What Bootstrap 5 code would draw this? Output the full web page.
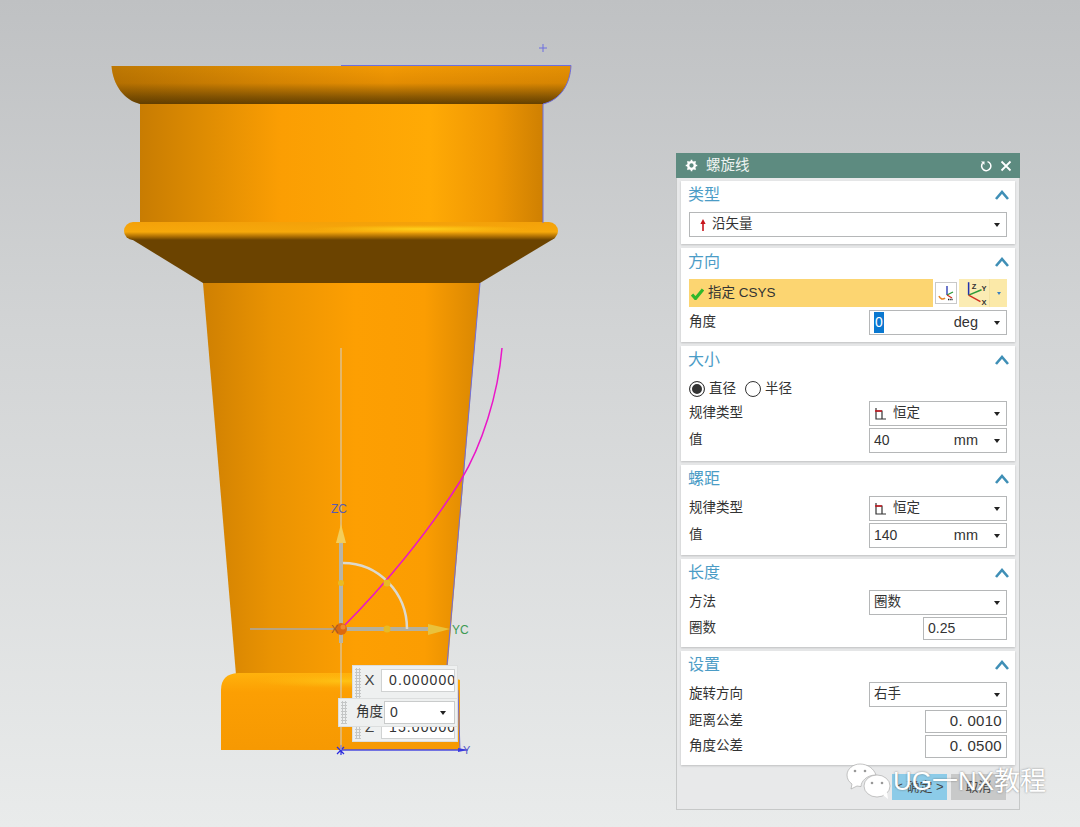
<!DOCTYPE html>
<html lang="zh-CN">
<head>
    <meta charset="UTF-8">
    <meta name="viewport" content="width=device-width, initial-scale=1.0">
    <title>螺旋线</title>
    <link rel="stylesheet" href="https://cdn.jsdelivr.net/npm/bootstrap@5.3.0/dist/css/bootstrap.min.css">
    <style>
        body {
            margin: 0;
            height: 827px;
            overflow: hidden;
            font-family: "Liberation Sans", "Noto Sans CJK SC", sans-serif;
            font-size: 13.5px;
            color: #333;
            background: linear-gradient(180deg, #bfc1c3 0%, #d2d4d5 40%, #e9ebeb 100%);
        }

        /* model view behind everything */
        .viewport { position: absolute; left: 0; top: 0; }

        .stage { position: relative; padding: 153px 60px 0 676px; }

        .dialog {
            width: 344px;
            height: 657px;
            background: #e8e9ea;
            border: 1px solid #c6c8c8;
            border-top: 0;
        }
        .dialog-title {
            height: 25px;
            margin: 0 -1px;
            background: #5d8b80;
            color: #eef3f1;
            font-size: 14.5px;
            padding: 0 8px 0 9px;
        }
        .sections { padding: 3px 4px 0; gap: 4px; }
        .section {
            background: #fff;
            padding: 0 8px 7px;
            box-shadow: 0 1px 2px rgba(0, 0, 0, .18);
        }
        .section-head { height: 31px; padding-bottom: 3px; margin-left: -1px; color: #4b9cc6; font-size: 16px; }
        .section-head svg { margin-right: -2px; }

        .line { height: 25px; }
        .line-sm { height: 23px; }
        .line-radio { height: 24px; }
        .mt-2px { margin-top: 2px; }
        .mt-3px { margin-top: 3px; }
        .pb-8px { padding-bottom: 8px; }

        .field {
            width: 138px;
            height: 100%;
            background: #fff;
            border: 1px solid #b5b7b8;
            padding: 0 4px;
            font-size: 13.5px;
        }
        .field-full { width: 318px; }
        .field-short { width: 84px; font-size: 14px; }
        .field-num { width: 82px; justify-content: flex-end; font-size: 15px; letter-spacing: .3px; }
        .field-value { font-size: 14px; }
        .unit { margin-left: auto; margin-right: 16px; font-size: 14.5px; }
        .caret-down {
            width: 0;
            height: 0;
            border-left: 3.5px solid transparent;
            border-right: 3.5px solid transparent;
            border-top: 4px solid #222;
            margin-right: 2px;
        }
        .field-full .caret-down { margin-left: auto; }
        .type-icon { margin: 0 3px 0 3px; }
        .law-icon { margin-right: 5px; }

        .selected-text { background: #0a78d0; color: #fff; padding: 0 1px; }

        .banner { height: 28px; width: 244px; background: #fcd571; padding: 1px 0 0 2px; }
        .tool-btn { width: 22px; height: 22px; border: 1px solid #c9c9c9; background: #fff; margin-left: 2px; }
        .tool-split { width: 48px; height: 28px; margin-left: 2px; background: #fbecb4; }
        .tool-split span { height: 100%; }
        .tool-split .drop { width: 18px; background: #fbe9a8; border-left: 1px solid #f3e2a2; }
        .tool-split .caret-down { border-top-color: #3a7fc0; border-top-width: 3px; border-left-width: 2.5px; border-right-width: 2.5px; }

        .radio {
            width: 16px;
            height: 16px;
            border-radius: 50%;
            border: 1px solid #333;
            background: #fff;
        }
        .radio.on { box-shadow: inset 0 0 0 2px #fff, inset 0 0 0 8px #333; }
        .radio-gap { margin-right: 9px; }

        .dialog-buttons { gap: 4px; padding: 9px 13px 0 0; }
        .dialog-btn { width: 55px; height: 26px; font-size: 13px; color: #444; }
        .dialog-btn.ok { background: #8ccbe8; }
        .dialog-btn.cancel { background: #c8c9c9; }

        /* floating handle inputs over the model */
        .handle-panel {
            position: absolute;
            left: 352px;
            top: 665px;
            width: 106px;
            height: 77px;
            background: #eef0f0;
            border: 1px solid #dcdede;
            padding: 3px 2px 0 5px;
        }
        .handle-row { height: 23px; margin-bottom: 24px; }
        .handle-row:last-child { margin-bottom: 0; }
        .handle-label { width: 23px; font-size: 15px; text-align: center; color: #444; }
        .handle-input {
            width: 74px;
            height: 23px;
            line-height: 21px;
            background: #fff;
            border: 1px solid #d0d2d2;
            padding-left: 7px;
            font-size: 14px;
            letter-spacing: 1.1px;
            overflow: hidden;
            white-space: nowrap;
        }
        .handle-angle {
            position: absolute;
            left: 338px;
            top: 698px;
            width: 120px;
            height: 29px;
            background: #eef0f0;
            border: 1px solid #dcdede;
            padding-right: 2px;
        }
        .handle-angle .field { width: 71px; height: 23px; font-size: 14px; border-color: #c9cbcb; padding-left: 5px; }
        .handle-angle .label { margin-left: auto; margin-right: 1px; font-size: 13.5px; }
        .grip {
            position: absolute;
            left: 2px;
            top: 2px;
            bottom: 2px;
            width: 6px;
            background-image: radial-gradient(circle, #c4c6c6 1px, transparent 1.1px);
            background-size: 3px 3px;
        }

        .watermark {
            position: absolute;
            left: 846px;
            top: 761px;
            color: #fff;
            font-size: 26px;
            line-height: 40px;
            text-shadow: 0 0 2px rgba(90, 90, 90, .75);
        }
        .watermark svg { margin-right: 1px; }
    </style>
</head>
<body>
    <!-- model: revolved part, curve and csys handle -->
    <svg class="viewport" width="1080" height="827" viewBox="0 0 1080 827">
        <defs>
            <linearGradient id="body" x1="0" x2="1" y1="0" y2="0">
                <stop offset="0" stop-color="#c87c02"/>
                <stop offset=".17" stop-color="#e08d02"/>
                <stop offset=".35" stop-color="#fb9e03"/>
                <stop offset=".72" stop-color="#ffaa05"/>
                <stop offset=".88" stop-color="#ee9603"/>
                <stop offset="1" stop-color="#cf8002"/>
            </linearGradient>
            <linearGradient id="cone" x1="0" x2="1" y1="0" y2="0">
                <stop offset="0" stop-color="#cf8002"/>
                <stop offset=".25" stop-color="#ea9302"/>
                <stop offset=".55" stop-color="#fd9f02"/>
                <stop offset=".8" stop-color="#fb9d02"/>
                <stop offset="1" stop-color="#d98702"/>
            </linearGradient>
            <linearGradient id="lip" x1="0" x2="0" y1="0" y2="1">
                <stop offset="0" stop-color="#f39a04"/>
                <stop offset=".45" stop-color="#e48d02"/>
                <stop offset=".8" stop-color="#8d5a02"/>
                <stop offset="1" stop-color="#644000"/>
            </linearGradient>
            <linearGradient id="lipSide" x1="0" x2="1" y1="0" y2="0">
                <stop offset="0" stop-color="#5a3800" stop-opacity=".35"/>
                <stop offset=".35" stop-color="#5a3800" stop-opacity=".12"/>
                <stop offset=".6" stop-color="#5a3800" stop-opacity="0"/>
                <stop offset="1" stop-color="#5a3800" stop-opacity=".1"/>
            </linearGradient>
            <linearGradient id="bead" x1="0" x2="0" y1="0" y2="1">
                <stop offset="0" stop-color="#f4a109"/>
                <stop offset=".55" stop-color="#f6a80b"/>
                <stop offset=".8" stop-color="#ad6f03"/>
                <stop offset="1" stop-color="#6b4300"/>
            </linearGradient>
            <linearGradient id="base" x1="0" x2="0" y1="0" y2="1">
                <stop offset="0" stop-color="#ffb20c"/>
                <stop offset=".25" stop-color="#fc9f03"/>
                <stop offset="1" stop-color="#f69902"/>
            </linearGradient>
            <radialGradient id="glow" cx=".5" cy=".5" r=".5">
                <stop offset="0" stop-color="#ffd21c"/>
                <stop offset="1" stop-color="#ffc414" stop-opacity="0"/>
            </radialGradient>
        </defs>

        <path d="M203 283 H480 L447 675 H236 Z" fill="url(#cone)"/>
        <path d="M221 750 V690 Q221 674 238 673 H440 L460 680 V750 Z" fill="url(#base)"/>
        <ellipse cx="345" cy="681" rx="90" ry="7" fill="url(#glow)" opacity=".6"/>
        <rect x="140" y="100" width="403" height="125" fill="url(#body)"/>
        <path d="M111.5 66 H571 C570 85 560 100 543 104 H140 C124 100 113 85 111.5 66 Z" fill="url(#lip)"/>
        <path d="M111.5 66 H571 C570 85 560 100 543 104 H140 C124 100 113 85 111.5 66 Z" fill="url(#lipSide)"/>
        <path d="M128 237 L203 283 H480 L555 238 Z" fill="#6b4300"/>
        <rect x="124" y="222" width="434" height="18" rx="9" fill="url(#bead)"/>
        <ellipse cx="420" cy="229" rx="110" ry="4" fill="url(#glow)"/>

        <!-- blue silhouette edges -->
        <g fill="none" stroke="#6d6ee0" stroke-width="1">
            <path d="M341 65.5 H571 C570 85 560 100 543 104 V223"/>
            <path d="M480 283 L447 665"/>
            <path d="M458 690 L460 750 H341"/>
            <path d="M539 48 H547 M543 44 V52"/>
        </g>
        <path d="M341 750 H468" stroke="#3a3ae0" stroke-width="1.2"/>
        <path d="M458 748 L468 750 L458 752 Z" fill="#3a3ae0"/>
        <path d="M337 747 L344 754 M344 747 L337 754 M341 745 V755" stroke="#2a2ae0" stroke-width="1.2"/>
        <text x="463" y="754" font-family="Liberation Sans" font-size="11" fill="#5a5ac8">Y</text>

        <!-- csys handle -->
        <path d="M341 348 V750" stroke="#cfd1d1" stroke-width="1"/>
        <path d="M250 629 H341" stroke="#a9a9a9" stroke-width="1.5"/>
        <path d="M341 540 V643" stroke="#b9b5a6" stroke-width="4"/>
        <path d="M341 629 H430" stroke="#b4b09f" stroke-width="4"/>
        <path d="M341 524 L346 543 H336 Z" fill="#f3cd5a"/>
        <path d="M450 629 L428 624 V635 Z" fill="#e9c23d"/>
        <path d="M343 563 A64 66 0 0 1 407 629" fill="none" stroke="#dcd9ce" stroke-width="2.5"/>
        <path d="M502 348 C498 395 482 445 461 480 C430 530 385 585 341 629" fill="none" stroke="#ea16c8" stroke-width="1.5"/>
        <circle cx="341" cy="583" r="3" fill="#e8bb25"/>
        <circle cx="387" cy="583" r="3.5" fill="#e8bb25"/>
        <circle cx="387" cy="629" r="3.5" fill="#e8bb25"/>
        <circle cx="341" cy="629" r="6" fill="#dd6a0e"/>
        <circle cx="343" cy="627" r="2.5" fill="#f08a2c"/>
        <text x="331" y="513" font-family="Liberation Sans" font-size="12" fill="#5a5ab0">ZC</text>
        <text x="452" y="634" font-family="Liberation Sans" font-size="12" fill="#3d9a52">YC</text>
        <text x="331" y="633" font-family="Liberation Sans" font-size="11" fill="#a05a30">X</text>
    </svg>

    <!-- floating inputs -->
    <div class="handle-panel">
        <i class="grip"></i>
        <div class="handle-row d-flex align-items-center"><span class="handle-label">X</span><div class="handle-input">0.000000</div></div>
        <div class="handle-row d-flex align-items-center"><span class="handle-label">Z</span><div class="handle-input">15.000000</div></div>
    </div>
    <div class="handle-angle d-flex align-items-center">
        <i class="grip"></i>
        <span class="label">角度</span>
        <div class="field d-flex align-items-center">0<i class="caret-down ms-auto me-1"></i></div>
    </div>

    <div class="stage">
        <div class="dialog d-flex flex-column">
            <div class="dialog-title d-flex align-items-center">
                <svg width="13" height="13" viewBox="0 0 14 14" class="me-2"><circle cx="7" cy="7" r="3.6" fill="none" stroke="#fff" stroke-width="2.6"/><path d="M7 .8V3M7 11v2.2M.8 7H3M11 7h2.2M2.6 2.6l1.5 1.5M9.9 9.9l1.5 1.5M2.6 11.4l1.5-1.5M9.9 4.1l1.5-1.5" stroke="#fff" stroke-width="1.8"/></svg>
                <span class="title-text">螺旋线</span>
                <svg width="12" height="12" viewBox="0 0 12 12" class="ms-auto"><path d="M7.5 1.6A4.6 4.6 0 1 1 2.6 3.2" fill="none" stroke="#fff" stroke-width="1.5"/><path d="M1 1.4l3.6.2-.2 3.4z" fill="#fff"/></svg>
                <svg width="12" height="12" viewBox="0 0 12 12" class="ms-2"><path d="M1.5 1.5l9 9M10.5 1.5l-9 9" stroke="#fff" stroke-width="1.8"/></svg>
            </div>

            <div class="sections d-flex flex-column">
                <div class="section">
                    <div class="section-head d-flex align-items-center justify-content-between">类型
                        <svg width="14" height="10" viewBox="0 0 14 10"><path d="M1 9l6-7 6 7" fill="none" stroke="#3f8fb6" stroke-width="2.6"/></svg>
                    </div>
                    <div class="line">
                        <div class="field field-full d-flex align-items-center">
                            <svg width="12" height="14" viewBox="0 0 12 14" class="type-icon"><path d="M6 1l2.6 5H6.8v7H5.2V6H3.4z" fill="#c8141c"/></svg>沿矢量<i class="caret-down"></i>
                        </div>
                    </div>
                </div>

                <div class="section">
                    <div class="section-head d-flex align-items-center justify-content-between">方向
                        <svg width="14" height="10" viewBox="0 0 14 10"><path d="M1 9l6-7 6 7" fill="none" stroke="#3f8fb6" stroke-width="2.6"/></svg>
                    </div>
                    <div class="d-flex align-items-center">
                        <div class="banner d-flex align-items-center">
                            <svg width="13" height="12" viewBox="0 0 13 12" class="me-1"><path d="M1 6.5l3.5 4L12 1.5" fill="none" stroke="#2fb82b" stroke-width="3.2"/></svg>指定 CSYS
                        </div>
                        <div class="tool-btn d-flex align-items-center justify-content-center">
                            <svg width="18" height="18" viewBox="0 0 18 18"><path d="M10 2v9" stroke="#2030b0" stroke-width="1.3"/><path d="M10 11l6-3" stroke="#2e9a3a" stroke-width="1.3"/><path d="M10 11l5 3" stroke="#d03020" stroke-width="1.3"/><path d="M2 12c1 3 4 4 6 2" fill="none" stroke="#e8862a" stroke-width="1.6"/><path d="M11 15.5h5" stroke="#222" stroke-width="1.5" stroke-dasharray="1.4 .8"/></svg>
                        </div>
                        <div class="tool-split d-flex">
                            <span class="d-flex flex-grow-1 align-items-center justify-content-center">
                                <svg width="28" height="26" viewBox="0 0 26 24"><path d="M8 14V2" stroke="#2030b0" stroke-width="1.4"/><path d="M8 14l12-5" stroke="#2e9a3a" stroke-width="1.4"/><path d="M8 14l11 6" stroke="#d03020" stroke-width="1.4"/><text x="11" y="8" font-size="7" font-weight="700" font-family="Liberation Sans" fill="#333">Z</text><text x="20" y="10" font-size="7" font-weight="700" font-family="Liberation Sans" fill="#333">Y</text><text x="20" y="23" font-size="7" font-weight="700" font-family="Liberation Sans" fill="#333">X</text></svg>
                            </span>
                            <span class="drop d-flex align-items-center justify-content-center"><i class="caret-down m-0"></i></span>
                        </div>
                    </div>
                    <div class="line mt-3px d-flex align-items-center justify-content-between">角度
                        <div class="field field-value d-flex align-items-center"><span class="selected-text">0</span><span class="unit">deg</span><i class="caret-down"></i></div>
                    </div>
                </div>

                <div class="section pb-8px">
                    <div class="section-head d-flex align-items-center justify-content-between">大小
                        <svg width="14" height="10" viewBox="0 0 14 10"><path d="M1 9l6-7 6 7" fill="none" stroke="#3f8fb6" stroke-width="2.6"/></svg>
                    </div>
                    <div class="line-radio d-flex align-items-center">
                        <span class="radio on me-1"></span><span class="radio-gap">直径</span>
                        <span class="radio me-1"></span><span>半径</span>
                    </div>
                    <div class="line d-flex align-items-center justify-content-between">规律类型
                        <div class="field d-flex align-items-center">
                            <svg width="14" height="14" viewBox="0 0 14 14" class="law-icon"><path d="M2 1v11h10M2 4h6v8" fill="none" stroke="#333" stroke-width="1.2"/><path d="M1 4h7" stroke="#c8141c" stroke-width="1.5"/></svg>恒定<i class="caret-down ms-auto"></i>
                        </div>
                    </div>
                    <div class="line mt-2px d-flex align-items-center justify-content-between">值
                        <div class="field field-value d-flex align-items-center">40<span class="unit">mm</span><i class="caret-down"></i></div>
                    </div>
                </div>

                <div class="section">
                    <div class="section-head d-flex align-items-center justify-content-between">螺距
                        <svg width="14" height="10" viewBox="0 0 14 10"><path d="M1 9l6-7 6 7" fill="none" stroke="#3f8fb6" stroke-width="2.6"/></svg>
                    </div>
                    <div class="line d-flex align-items-center justify-content-between">规律类型
                        <div class="field d-flex align-items-center">
                            <svg width="14" height="14" viewBox="0 0 14 14" class="law-icon"><path d="M2 1v11h10M2 4h6v8" fill="none" stroke="#333" stroke-width="1.2"/><path d="M1 4h7" stroke="#c8141c" stroke-width="1.5"/></svg>恒定<i class="caret-down ms-auto"></i>
                        </div>
                    </div>
                    <div class="line mt-2px d-flex align-items-center justify-content-between">值
                        <div class="field field-value d-flex align-items-center">140<span class="unit">mm</span><i class="caret-down"></i></div>
                    </div>
                </div>

                <div class="section">
                    <div class="section-head d-flex align-items-center justify-content-between">长度
                        <svg width="14" height="10" viewBox="0 0 14 10"><path d="M1 9l6-7 6 7" fill="none" stroke="#3f8fb6" stroke-width="2.6"/></svg>
                    </div>
                    <div class="line d-flex align-items-center justify-content-between">方法
                        <div class="field d-flex align-items-center">圈数<i class="caret-down ms-auto"></i></div>
                    </div>
                    <div class="line-sm mt-2px d-flex align-items-center justify-content-between">圈数
                        <div class="field field-short d-flex align-items-center">0.25</div>
                    </div>
                </div>

                <div class="section">
                    <div class="section-head d-flex align-items-center justify-content-between">设置
                        <svg width="14" height="10" viewBox="0 0 14 10"><path d="M1 9l6-7 6 7" fill="none" stroke="#3f8fb6" stroke-width="2.6"/></svg>
                    </div>
                    <div class="line d-flex align-items-center justify-content-between">旋转方向
                        <div class="field d-flex align-items-center">右手<i class="caret-down ms-auto"></i></div>
                    </div>
                    <div class="line-sm mt-3px d-flex align-items-center justify-content-between">距离公差
                        <div class="field field-num d-flex align-items-center">0. 0010</div>
                    </div>
                    <div class="line-sm mt-2px d-flex align-items-center justify-content-between">角度公差
                        <div class="field field-num d-flex align-items-center">0. 0500</div>
                    </div>
                </div>
            </div>

            <div class="dialog-buttons d-flex justify-content-end">
                <div class="dialog-btn ok d-flex align-items-center justify-content-center">&lt; 确定 &gt;</div>
                <div class="dialog-btn cancel d-flex align-items-center justify-content-center">取消</div>
            </div>
        </div>
    </div>

    <div class="watermark d-flex align-items-center">
        <svg width="46" height="38" viewBox="0 0 46 38">
            <path d="M14 2C7 2 1 7 1 13c0 4 2 7 5 9l-1 5 6-3 4 .6C15 19 21 13 30 13 28 7 22 2 14 2Z" fill="#fff" stroke="#aaa" stroke-width=".7"/>
            <ellipse cx="31" cy="24" rx="13" ry="11" fill="#fff" stroke="#aaa" stroke-width=".7"/>
            <path d="M37 33l5 4-1-7z" fill="#fff"/>
            <circle cx="9" cy="9" r="1.3" fill="#999"/><circle cx="19" cy="9" r="1.3" fill="#999"/>
            <circle cx="26" cy="21" r="1.3" fill="#999"/><circle cx="36" cy="21" r="1.3" fill="#999"/>
        </svg>
        <span>UG一NX教程</span>
    </div>

    <script src="https://cdn.jsdelivr.net/npm/bootstrap@5.3.0/dist/js/bootstrap.bundle.min.js"></script>
</body>
</html>
